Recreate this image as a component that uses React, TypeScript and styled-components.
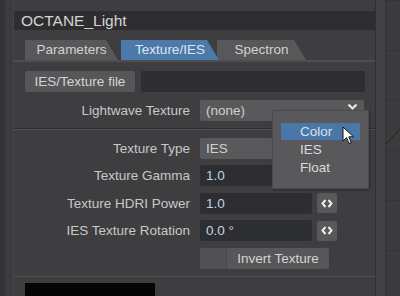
import React from 'react';
import styled, { createGlobalStyle } from 'styled-components';

const GlobalStyle = createGlobalStyle`
  html, body {
    margin: 0;
    padding: 0;
    background: #3b3b3d;
    overflow: hidden;
  }
  body {
    font-family: "Liberation Sans", Arial, sans-serif;
    font-size: 13.5px;
    color: #cacaca;
  }
`;

const Screen = styled.div`
  display: flex;
  width: 400px;
  height: 296px;
  overflow: hidden;
`;

const LeftStrip = styled.div`
  width: 13px;
  flex: none;
  background: linear-gradient(to right, #333335 0 5px, #3c3c3e 5px);
`;

const Panel = styled.div`
  position: relative;
  width: 363px;
  flex: none;
  padding-top: 11px;
  background: #3e3e40;
  border-left: 1px solid #464648;
  border-right: 1px solid #303032;
  box-sizing: border-box;
  display: flex;
  flex-direction: column;
`;

const TitleBar = styled.div`
  height: 19px;
  line-height: 19px;
  padding-left: 7px;
  background: #2e2e30;
  color: #d4d4d4;
  font-size: 15.5px;
`;

const TabStrip = styled.div`
  display: flex;
  height: 20px;
  margin-top: 10px;
  padding-left: 11px;
  border-bottom: 2px solid #4f4f51;
`;

const Tab = styled.div<{ $active?: boolean; $width: number; $overlap?: number }>`
  width: ${(p) => p.$width}px;
  margin-left: ${(p) => p.$overlap ?? 0}px;
  height: 20px;
  line-height: 20px;
  text-align: center;
  background: ${(p) => (p.$active ? '#4b79aa' : '#58585a')};
  color: ${(p) => (p.$active ? '#dfe6ee' : '#d2d2d2')};
  clip-path: polygon(0 0, calc(100% - 12px) 0, 100% 100%, 0 100%);
  position: relative;
  z-index: ${(p) => (p.$active ? 2 : 1)};
`;

const Section = styled.div<{ $top: number }>`
  display: flex;
  flex-direction: column;
  gap: 6.5px;
  padding: 0 10px 0 11px;
  margin-top: ${(p) => p.$top}px;
`;

const Row = styled.div`
  display: flex;
  align-items: center;
  height: 21px;
`;

const Label = styled.div`
  width: 175px;
  padding-right: 10px;
  box-sizing: border-box;
  text-align: right;
  white-space: nowrap;
  color: #c8c8c8;
`;

const Button = styled.div<{ $width: number }>`
  width: ${(p) => p.$width}px;
  height: 21px;
  line-height: 21px;
  background: #575759;
  border-radius: 2px;
  color: #d4d4d4;
  text-align: center;
  box-sizing: border-box;
`;

const Field = styled.div<{ $width: number; $dark?: boolean }>`
  width: ${(p) => p.$width}px;
  height: 21px;
  line-height: 21px;
  padding-left: 6px;
  box-sizing: border-box;
  border-radius: 2px;
  background: ${(p) => (p.$dark ? '#2d2e31' : '#59595b')};
  color: ${(p) => (p.$dark ? '#c7d2e2' : '#d0d0d0')};
  display: flex;
  align-items: center;
  justify-content: space-between;
  padding-right: 6px;
`;

const ChevronBox = styled.span`
  align-self: flex-start;
  margin-top: 3px;
  display: flex;
`;

const Stepper = styled.div`
  width: 20px;
  height: 20px;
  margin-left: 5px;
  border-radius: 2px;
  background: #58585a;
  display: flex;
  align-items: center;
  justify-content: center;
`;

const CheckCell = styled.div`
  width: 26px;
  height: 21px;
  background: #525254;
  border-right: 1px solid #48484a;
  border-radius: 2px 0 0 2px;
`;

const ToggleButton = styled(Button)`
  border-radius: 0 2px 2px 0;
`;

const Separator = styled.div<{ $top: number }>`
  margin-top: ${(p) => p.$top}px;
  height: 1px;
  background: #2c2c2e;
  border-bottom: 1px solid #505052;
`;

const Swatch = styled.div`
  margin: 6px 0 0 11px;
  width: 130px;
  height: 20px;
  background: #050505;
`;

const RightFrame = styled.div`
  width: 9px;
  flex: none;
  background: #424244;
  border-right: 1px solid #333335;
`;

const Viewport = styled.div`
  flex: 1;
  background-color: #3a3b3d;
  background-image: linear-gradient(to bottom, #333436 1px, transparent 1px);
  background-size: 100% 50px;
  position: relative;
`;

const Menu = styled.div`
  position: absolute;
  left: 258px;
  top: 110px;
  width: 97px;
  height: 79px;
  box-sizing: border-box;
  padding: 12px 8px 0 8px;
  background: #59595b;
  border: 1px solid #4c4c4e;
  box-shadow: 1px 1px 2px rgba(0, 0, 0, 0.35);
  z-index: 5;
`;

const MenuItem = styled.div<{ $selected?: boolean }>`
  height: 17px;
  line-height: 17px;
  padding-left: 19px;
  margin-bottom: 1px;
  background: ${(p) => (p.$selected ? '#4a77a8' : 'transparent')};
  color: ${(p) => (p.$selected ? '#d6e0ec' : '#dadada')};
`;

const Cursor = styled.svg`
  position: absolute;
  left: 328px;
  top: 126px;
  z-index: 6;
`;

const Chevron = () => (
  <svg width="11" height="8" viewBox="0 0 11 8">
    <path d="M1.5 1.5 L5.5 5.5 L9.5 1.5" stroke="#e6e6e6" strokeWidth="2.2" fill="none" />
  </svg>
);

const Arrows = () => (
  <svg width="12" height="9" viewBox="0 0 12 9">
    <path d="M4.5 1 L1.5 4.5 L4.5 8 M7.5 1 L10.5 4.5 L7.5 8" stroke="#ededed" strokeWidth="2" fill="none" />
  </svg>
);

const App = () => (
  <>
    <GlobalStyle />
    <Screen>
      <LeftStrip />
      <Panel>
        <TitleBar>OCTANE_Light</TitleBar>
        <TabStrip>
          <Tab $width={93}>Parameters</Tab>
          <Tab $width={98} $overlap={3} $active>Texture/IES</Tab>
          <Tab $width={89} $overlap={-2}>Spectron</Tab>
        </TabStrip>
        <Section $top={9}>
          <Row>
            <Button $width={110}>IES/Texture file</Button>
            <Field $width={224} $dark style={{ marginLeft: 6 }} />
          </Row>
        </Section>
        <Section $top={8}>
          <Row>
            <Label>Lightwave Texture</Label>
            <Field $width={164}>
              <span>(none)</span>
              <ChevronBox><Chevron /></ChevronBox>
            </Field>
          </Row>
        </Section>
        <Separator $top={7} />
        <Section $top={8}>
          <Row>
            <Label>Texture Type</Label>
            <Field $width={112}>IES</Field>
          </Row>
          <Row>
            <Label>Texture Gamma</Label>
            <Field $width={112} $dark>1.0</Field>
          </Row>
          <Row>
            <Label>Texture HDRI Power</Label>
            <Field $width={112} $dark>1.0</Field>
            <Stepper><Arrows /></Stepper>
          </Row>
          <Row>
            <Label>IES Texture Rotation</Label>
            <Field $width={112} $dark>0.0 °</Field>
            <Stepper><Arrows /></Stepper>
          </Row>
          <Row>
            <Label />
            <CheckCell />
            <ToggleButton $width={102}>Invert Texture</ToggleButton>
          </Row>
        </Section>
        <Separator $top={7} />
        <Swatch />

        <Menu>
          <MenuItem $selected>Color</MenuItem>
          <MenuItem>IES</MenuItem>
          <MenuItem>Float</MenuItem>
        </Menu>
        <Cursor width="13" height="19" viewBox="0 0 13 19">
          <path d="M1 1 L1 15 L4.5 11.5 L7 17.5 L9.2 16.5 L6.8 10.8 L11.5 10.8 Z" fill="#ffffff" stroke="#111" strokeWidth="1" strokeLinejoin="round" />
        </Cursor>
      </Panel>
      <RightFrame />
      <Viewport>
        <svg width="15" height="296" viewBox="0 0 15 296" style={{ position: 'absolute', left: 0, top: 0 }}>
          <path d="M0 144 L15 128" stroke="#222" strokeWidth="1" />
        </svg>
      </Viewport>
    </Screen>
  </>
);

export default App;
